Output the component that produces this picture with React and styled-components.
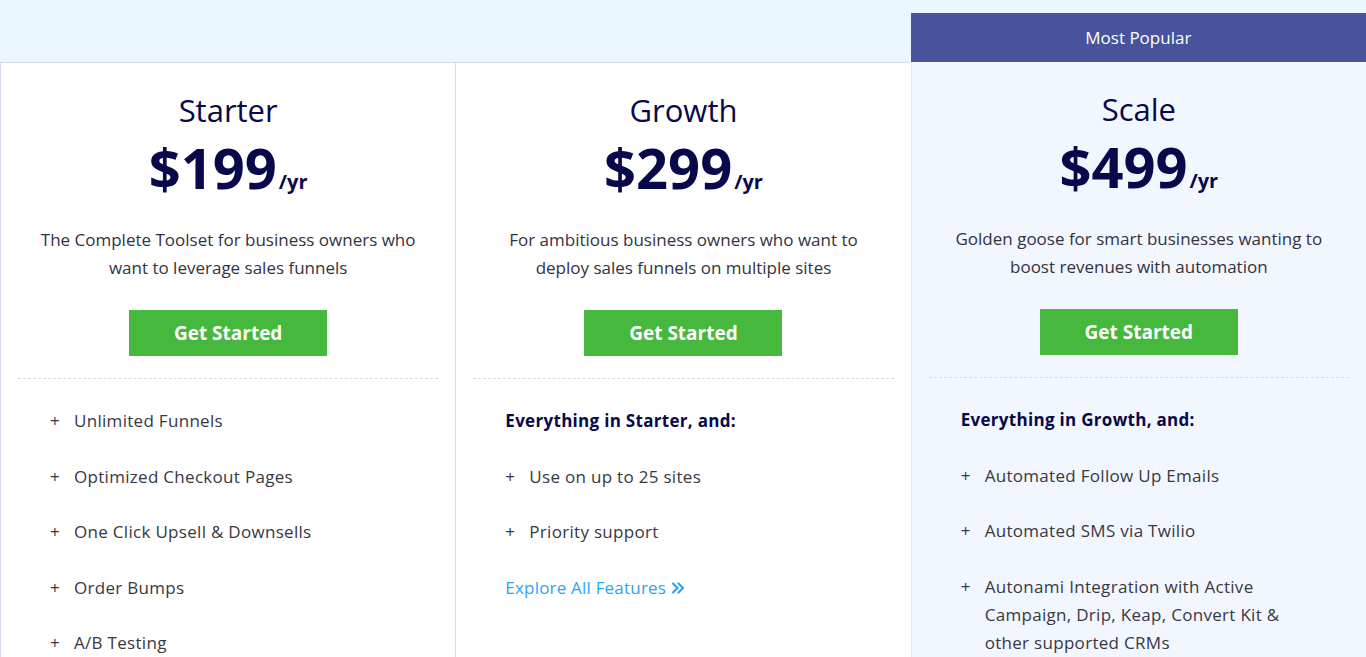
import React from "react";
import styled, { createGlobalStyle } from "styled-components";

const Global = createGlobalStyle`
  html, body { margin: 0; padding: 0; background: #ffffff; }
  body { font-family: "Open Sans", "Noto Sans", Arial, sans-serif; overflow: hidden; }
  * { box-sizing: border-box; }
`;

const Page = styled.div`
  display: flex;
  width: 1366px;
  height: 657px;
  overflow: hidden;
`;

const Column = styled.div`
  flex: 1 1 0;
  display: flex;
  flex-direction: column;
  min-width: 0;
`;

const Top = styled.div`
  flex: 0 0 62px;
  height: 62px;
  background: #e9f6ff;
  padding-top: 13px;
  display: flex;
  flex-direction: column;
`;

const Badge = styled.div`
  flex: 1;
  background: #48539b;
  color: #ffffff;
  display: flex;
  align-items: center;
  justify-content: center;
  font-size: 17px;
  font-weight: 500;
`;

const Card = styled.div`
  flex: 1 0 auto;
  background: ${(p) => (p.$featured ? "#f1f6ff" : "#ffffff")};
  border-left: 1px solid ${(p) => (p.$featured ? "#e3e6f4" : "#d6d9ef")};
  border-top: ${(p) => (p.$featured ? "none" : "1px solid #d6d9ef")};
  padding: 28px 17px 0 17px;
  display: flex;
  flex-direction: column;
  align-items: center;
`;

const Title = styled.h2`
  margin: 0;
  font-size: 31px;
  line-height: 38px;
  font-weight: 400;
  color: #08084a;
`;

const Price = styled.div`
  margin-top: 9px;
  display: flex;
  align-items: baseline;
  color: #08084a;
  height: 58px;
`;

const Amount = styled.span`
  font-size: 56px;
  line-height: 58px;
  font-weight: 700;
`;

const Per = styled.span`
  font-size: 20px;
  font-weight: 700;
  margin-left: 2px;
`;

const Desc = styled.p`
  margin: 30px 0 0;
  font-size: 17px;
  line-height: 28px;
  color: #333340;
  text-align: center;
  max-width: 385px;
`;

const Button = styled.button`
  margin-top: 28px;
  width: 198px;
  height: 46px;
  border: none;
  background: #46b83d;
  color: #ffffff;
  font-family: inherit;
  font-size: 19px;
  font-weight: 700;
  cursor: pointer;
`;

const Divider = styled.hr`
  align-self: stretch;
  margin: 22px 0 0;
  border: none;
  border-top: 1px dashed #dcdcdc;
`;

const Features = styled.ul`
  align-self: stretch;
  list-style: none;
  margin: 0;
  padding: 28px 0 0 32px;
  display: flex;
  flex-direction: column;
  gap: 27.5px;
`;

const Heading = styled.li`
  font-size: 17px;
  line-height: 28px;
  font-weight: 700;
  letter-spacing: 0.3px;
  color: #08084a;
`;

const Item = styled.li`
  display: flex;
  font-size: 17px;
  line-height: 28px;
  letter-spacing: 0.3px;
  color: #383842;
  max-width: 330px;
`;

const Plus = styled.span`
  flex: 0 0 24px;
  font-size: 17px;
`;

const Link = styled.a`
  font-size: 17px;
  line-height: 28px;
  letter-spacing: 0.2px;
  color: #2ea3f2;
  text-decoration: none;
  display: inline-flex;
  align-items: center;
  gap: 5px;
`;

const plans = [
  {
    name: "Starter",
    price: "$199",
    desc: "The Complete Toolset for business owners who want to leverage sales funnels",
    items: [
      "Unlimited Funnels",
      "Optimized Checkout Pages",
      "One Click Upsell & Downsells",
      "Order Bumps",
      "A/B Testing",
    ],
  },
  {
    name: "Growth",
    price: "$299",
    desc: "For ambitious business owners who want to deploy sales funnels on multiple sites",
    heading: "Everything in Starter, and:",
    items: ["Use on up to 25 sites", "Priority support"],
    link: true,
  },
  {
    name: "Scale",
    price: "$499",
    desc: "Golden goose for smart businesses wanting to boost revenues with automation",
    heading: "Everything in Growth, and:",
    items: [
      "Automated Follow Up Emails",
      "Automated SMS via Twilio",
      "Autonami Integration with Active Campaign, Drip, Keap, Convert Kit & other supported CRMs",
    ],
    featured: true,
  },
];

const Chevrons = () => (
  <svg width="14" height="14" viewBox="0 0 14 14" fill="none" stroke="#2ea3f2" strokeWidth="2.2" strokeLinecap="round" strokeLinejoin="round">
    <path d="M2 2.5 L6.5 7 L2 11.5" />
    <path d="M7.5 2.5 L12 7 L7.5 11.5" />
  </svg>
);

export default function App() {
  return (
    <Page>
      <Global />
      {plans.map((p) => (
        <Column key={p.name}>
          <Top>{p.featured && <Badge>Most Popular</Badge>}</Top>
          <Card $featured={p.featured}>
            <Title>{p.name}</Title>
            <Price>
              <Amount>{p.price}</Amount>
              <Per>/yr</Per>
            </Price>
            <Desc>{p.desc}</Desc>
            <Button>Get Started</Button>
            <Divider />
            <Features>
              {p.heading && <Heading>{p.heading}</Heading>}
              {p.items.map((it) => (
                <Item key={it}>
                  <Plus>+</Plus>
                  <span>{it}</span>
                </Item>
              ))}
              {p.link && (
                <li>
                  <Link href="#">
                    Explore All Features <Chevrons />
                  </Link>
                </li>
              )}
            </Features>
          </Card>
        </Column>
      ))}
    </Page>
  );
}
